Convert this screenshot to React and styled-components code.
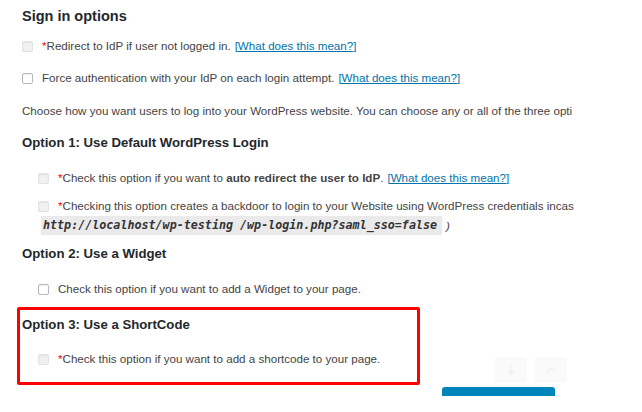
import React from "react";
import styled, { createGlobalStyle } from "styled-components";

const GlobalStyle = createGlobalStyle`
    html, body {
        margin: 0;
        padding: 0;
        background: #ffffff;
    }
    body {
        width: 642px;
        height: 412px;
        overflow: hidden;
        font-family: "Liberation Sans", Arial, sans-serif;
        color: #444444;
    }
`

const Page = styled.div`
    position: relative;
    width: 554px;
    height: 412px;
    padding: 6px 0 0 22px;
    overflow: hidden;
`

const Title = styled.h2`
    margin: 0;
    font-size: 14.5px;
    line-height: 20px;
    font-weight: 700;
    color: #23282d;
`

const Heading = styled.h3`
    margin: ${p => p.$mt || 0}px 0 0;
    font-size: 13.2px;
    line-height: 20px;
    font-weight: 700;
    color: #23282d;
`

const Row = styled.label`
    display: flex;
    align-items: center;
    gap: 9px;
    margin: ${p => p.$mt || 0}px 0 0 ${p => (p.$indent ? 16 : 0)}px;
    height: 20px;
    font-size: 11.6px;
    line-height: 20px;
    white-space: nowrap;
`

const Check = styled.span`
    flex: none;
    width: 11px;
    height: 11px;
    border-radius: 2px;
    box-sizing: border-box;
    border: 1px solid ${p => (p.$disabled ? "#e2e2e2" : "#b4b9be")};
    background: ${p => (p.$disabled ? "#f1f1f1" : "#ffffff")};
    box-shadow: inset 0 1px 2px rgba(0, 0, 0, 0.06);
`

const Star = styled.span`
    color: #ff0000;
`

const Link = styled.a`
    color: #0073aa;
    text-decoration: underline;
    margin-left: 4px;
`

const Text = styled.p`
    margin: ${p => p.$mt || 0}px 0 0;
    font-size: 11.6px;
    line-height: 20px;
    white-space: nowrap;
`

const CodeLine = styled.div`
    margin: 0 0 0 19px;
    height: 19px;
    display: flex;
    align-items: center;
    font-size: 11.6px;
    white-space: nowrap;
`

const Code = styled.code`
    background: #eaeaea;
    padding: 1px 5px 1px 2px;
    font-family: "DejaVu Sans Mono", "Liberation Mono", monospace;
    font-weight: 700;
    font-style: italic;
    font-size: 11.7px;
    line-height: 17px;
    color: #333333;
    margin-right: 4px;
`

const Highlight = styled.div`
    width: 395px;
    margin: 8px 0 0 -5px;
    padding: 5px 0 13px 2px;
    border: 3px solid #ff0000;
    border-radius: 2px;
`

const ButtonRow = styled.div`
    display: flex;
    padding-left: 420px;
    margin-top: 2px;
`

const SaveButton = styled.div`
    width: 113px;
    height: 9px;
    background: #0085ba;
    border-radius: 3px 3px 0 0;
`

const FloatTools = styled.div`
    position: absolute;
    left: 495px;
    top: 357px;
    display: flex;
    gap: 8px;
`

const FloatTool = styled.div`
    width: 32px;
    height: 26px;
    border-radius: 3px;
    background: #fafafa;
    display: flex;
    align-items: center;
    justify-content: center;
`

const WHAT = "[What does this mean?]";

export default function App() {
    return (
        <>
            <GlobalStyle />
            <Page>
                <Title>Sign in options</Title>

                <Row $mt={10}>
                    <Check $disabled />
                    <span>
                        <Star>*</Star>Redirect to IdP if user not logged in.
                        <Link href="#">{WHAT}</Link>
                    </span>
                </Row>

                <Row $mt={12}>
                    <Check />
                    <span>
                        Force authentication with your IdP on each login attempt.
                        <Link href="#">{WHAT}</Link>
                    </span>
                </Row>

                <Text $mt={13}>
                    Choose how you want users to log into your WordPress website. You can choose any or all of the three opti
                </Text>

                <Heading $mt={12}>Option 1: Use Default WordPress Login</Heading>

                <Row $indent $mt={15}>
                    <Check $disabled />
                    <span>
                        <Star>*</Star>Check this option if you want to <b>auto redirect the user to IdP</b>.
                        <Link href="#">{WHAT}</Link>
                    </span>
                </Row>

                <Row $indent $mt={8}>
                    <Check $disabled />
                    <span>
                        <Star>*</Star>Checking this option creates a backdoor to login to your Website using WordPress credentials incas
                    </span>
                </Row>
                <CodeLine>
                    <Code>http://localhost/wp-testing /wp-login.php?saml_sso=false</Code>
                    <i>)</i>
                </CodeLine>

                <Heading $mt={9}>Option 2: Use a Widget</Heading>

                <Row $indent $mt={15}>
                    <Check />
                    <span>Check this option if you want to add a Widget to your page.</span>
                </Row>

                <Highlight>
                    <Heading>Option 3: Use a ShortCode</Heading>
                    <Row $indent $mt={14}>
                        <Check $disabled />
                        <span>
                            <Star>*</Star>Check this option if you want to add a shortcode to your page.
                        </span>
                    </Row>
                </Highlight>

                <ButtonRow>
                    <SaveButton />
                </ButtonRow>
            </Page>

            <FloatTools>
                <FloatTool>
                    <svg width="10" height="10" viewBox="0 0 10 10">
                        <path d="M5 1 L5 9 M2 6 L5 9 L8 6" stroke="#f2f2f2" strokeWidth="2" fill="none" />
                    </svg>
                </FloatTool>
                <FloatTool>
                    <svg width="10" height="10" viewBox="0 0 10 10">
                        <path d="M1 7 L5 3 L9 7" stroke="#f2f2f2" strokeWidth="2" fill="none" />
                    </svg>
                </FloatTool>
            </FloatTools>
        </>
    );
}
